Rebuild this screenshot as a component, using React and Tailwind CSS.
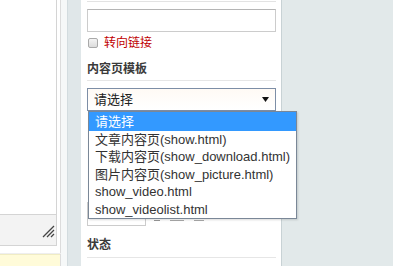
import React from "react";

const templates = [
  "请选择",
  "文章内容页(show.html)",
  "下载内容页(show_download.html)",
  "图片内容页(show_picture.html)",
  "show_video.html",
  "show_videolist.html",
];

function Grip() {
  return (
    <svg width="13" height="13" viewBox="0 0 13 13" className="absolute right-[1px] bottom-[7px]">
      <path d="M12 1 L1 12 M12 5 L5 12 M12 9 L9 12" stroke="#444" strokeWidth="1.3" />
    </svg>
  );
}

export default function App() {
  const selected = 0;

  return (
    <div className="relative flex w-[393px] h-[266px] overflow-hidden bg-[#e2e9ea] font-['Liberation_Sans','Noto_Sans_CJK_SC',sans-serif]">
      {/* editor column */}
      <div className="flex flex-col w-[61px] bg-white border-r border-[#dcdcdc]">
        <div className="h-[215px] w-[57px] bg-white border-r border-b border-[#d4d4d4]" />
        <div className="relative h-[31px] w-[57px] bg-[#f3f3f3] border-r border-b border-[#d4d4d4]">
          <Grip />
        </div>
        <div className="h-[8px] w-[61px] border-b border-[#eeeeee]" />
        <div className="flex-1 bg-[#fffbd9] border-t border-[#f0ecc4]" />
      </div>
      <div className="w-[6px] bg-[#f6f8f8]" />
      <div className="w-[14px] bg-[#e0e7e9] border-l border-[#d3dcdf]" />

      {/* form panel */}
      <div className="flex flex-col w-[201px] pl-[6px] pr-[5px] bg-white border-r border-[#c8d2d5]">
        <div className="mt-[1px] h-px bg-[#e3e3e3]" />
        <div className="mt-[7px] h-[23px] border border-[#cccccc] border-t-[#b5b5b5] bg-white" />
        <div className="mt-[5px] h-[12px] flex items-center gap-[6px]">
          <span className="ml-[1px] w-[10px] h-[10px] rounded-[2px] border border-[#a9a9a9] bg-gradient-to-b from-[#f4f4f4] to-[#dcdcdc]" />
          <span className="text-[12px] leading-[12px] text-[#c00000]">转向链接</span>
        </div>
        <div className="mt-[13px] h-[14px] text-[12px] leading-[14px] font-bold text-[#3a3a3a]">内容页模板</div>
        <div className="mt-[4px] h-px bg-[#e6e6e6]" />
        <div className="mt-[7px] h-[23px] flex items-center justify-between pl-[6px] pr-[6px] border border-[#7d8ea6] bg-gradient-to-b from-[#fffaf5] to-[#ffffff]">
          <span className="text-[13px] text-[#222222]">请选择</span>
          <svg width="7" height="5" viewBox="0 0 7 5">
            <path d="M0 0 H7 L3.5 5 Z" fill="#111" />
          </svg>
        </div>
        <div className="mt-[91px] h-[24px] flex items-end gap-[8px]">
          <div className="w-[59px] h-[24px] border border-[#cccccc] bg-white" />
          <div className="mb-[5px] flex gap-[10px]">
            <span className="w-[6px] h-px bg-[#999999]" />
            <span className="w-[14px] h-px bg-[#aaaaaa]" />
            <span className="w-[10px] h-px bg-[#aaaaaa]" />
          </div>
        </div>
        <div className="mt-[12px] h-[14px] text-[12px] leading-[14px] font-bold text-[#3a3a3a]">状态</div>
        <div className="mt-[5px] h-px bg-[#e6e6e6]" />
      </div>

      {/* open dropdown list */}
      <ul className="absolute left-[88px] top-[111px] w-[209px] bg-white border border-[#7a8797] text-[13px] shadow-[1px_1px_2px_rgba(0,0,0,0.15)]">
        {templates.map((t, i) => (
          <li
            key={t}
            className={
              "flex items-center pl-[6px] whitespace-nowrap " +
              (i === selected ? "h-[18.5px] bg-[#3399ff] text-white" : "h-[17.5px] text-[#333333]")
            }
          >
            {t}
          </li>
        ))}
      </ul>
    </div>
  );
}
